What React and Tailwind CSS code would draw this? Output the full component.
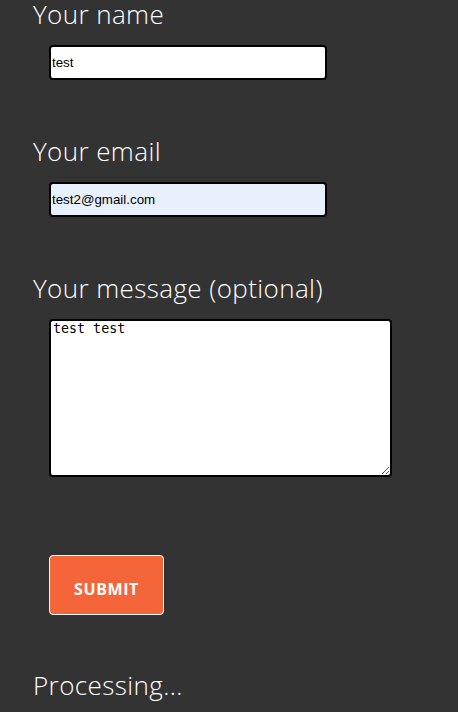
export default function App() {
  const label = "block text-[26px] leading-[28px] text-white font-['Open_Sans',sans-serif] font-light tracking-[0.4px]";
  const field =
    "block ml-4 w-[278px] h-[35px] border-2 border-black rounded-[4px] px-[1px] text-[13.33px] text-black font-['Liberation_Sans',Arial,sans-serif] outline-none";

  return (
    <div className="min-h-screen bg-[#333333] pl-[33px]">
      <form className="flex flex-col items-start" onSubmit={(e) => e.preventDefault()}>
        <label className={label}>Your name</label>
        <input className={`${field} mt-[17px] bg-white`} defaultValue="test" />

        <label className={`${label} mt-[57px]`}>Your email</label>
        <input className={`${field} mt-[17px] bg-[#e8f0fe]`} defaultValue="test2@gmail.com" />

        <label className={`${label} mt-[57px]`}>Your message (optional)</label>
        <textarea
          className="block ml-4 mt-[17px] w-[343px] h-[158px] border-2 border-black rounded-[4px] bg-white px-[2px] pt-0 text-[13.33px] leading-[16px] text-black font-['DejaVu_Sans_Mono',monospace] outline-none"
          defaultValue="test test"
        />

        <button
          type="submit"
          className="ml-4 mt-[78px] w-[115px] h-[60px] pt-[8px] bg-[#f4663a] border border-white rounded-[4px] text-white text-[16px] font-bold font-['Open_Sans',sans-serif] tracking-[0.6px]"
        >
          SUBMIT
        </button>

        <p className={`${label} mt-[56px]`}>Processing...</p>
      </form>
    </div>
  );
}
